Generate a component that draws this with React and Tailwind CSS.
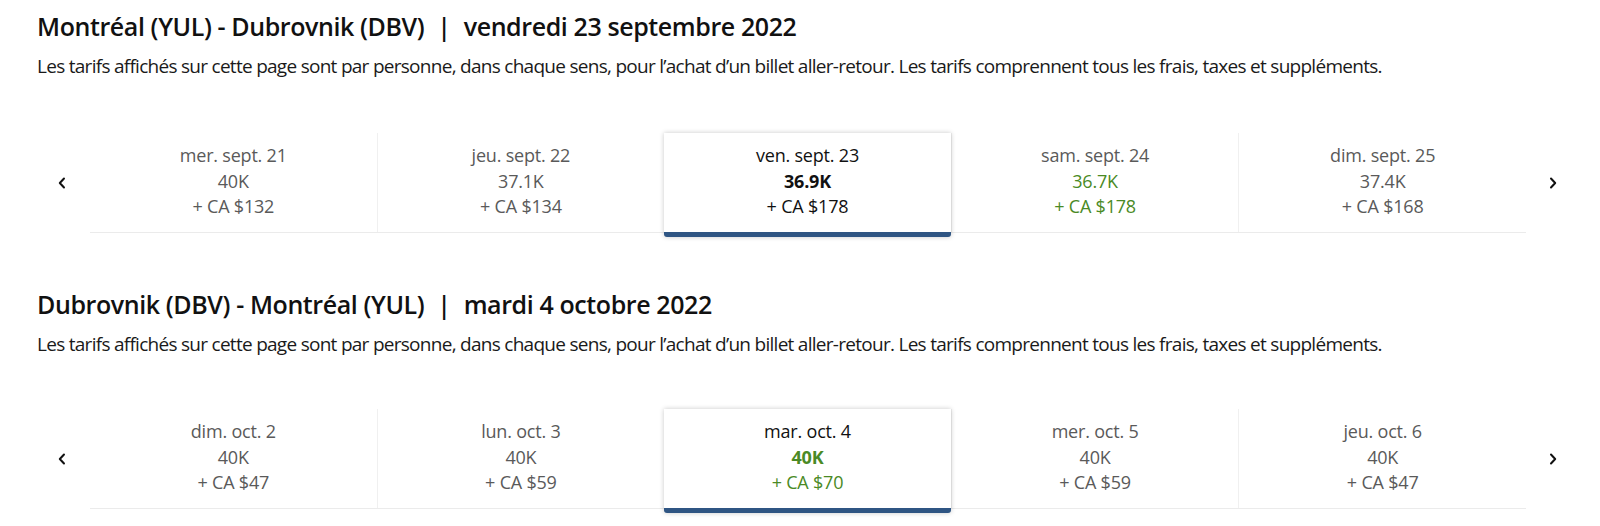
const sections = [
  {
    title: "Montréal (YUL) - Dubrovnik (DBV)",
    date: "vendredi 23 septembre 2022",
    days: [
      { label: "mer. sept. 21", pts: "40K", cash: "+ CA $132" },
      { label: "jeu. sept. 22", pts: "37.1K", cash: "+ CA $134" },
      { label: "ven. sept. 23", pts: "36.9K", cash: "+ CA $178", selected: true },
      { label: "sam. sept. 24", pts: "36.7K", cash: "+ CA $178", cheap: true },
      { label: "dim. sept. 25", pts: "37.4K", cash: "+ CA $168" },
    ],
  },
  {
    title: "Dubrovnik (DBV) - Montréal (YUL)",
    date: "mardi 4 octobre 2022",
    days: [
      { label: "dim. oct. 2", pts: "40K", cash: "+ CA $47" },
      { label: "lun. oct. 3", pts: "40K", cash: "+ CA $59" },
      { label: "mar. oct. 4", pts: "40K", cash: "+ CA $70", selected: true, cheap: true },
      { label: "mer. oct. 5", pts: "40K", cash: "+ CA $59" },
      { label: "jeu. oct. 6", pts: "40K", cash: "+ CA $47" },
    ],
  },
];

function Chevron({ dir }) {
  return (
    <svg width="8" height="12" viewBox="0 0 8 12" fill="none">
      <path
        d={dir === "left" ? "M6 1.5 L1.8 6 L6 10.5" : "M2 1.5 L6.2 6 L2 10.5"}
        stroke="#111"
        strokeWidth="2"
        strokeLinecap="round"
        strokeLinejoin="round"
      />
    </svg>
  );
}

function DayCard({ day, first }) {
  if (day.selected) {
    return (
      <div className="relative z-10 flex-1 h-[104px] -mb-[5px] bg-white rounded-b-[3px] border-b-[5px] border-[#2f5583] shadow-[0_0_5px_rgba(0,0,0,0.22)] pt-[10px] text-center text-[18px] leading-[25.5px] tracking-[-0.2px]">
        <div className="text-[#111]">{day.label}</div>
        <div className={`font-bold ${day.cheap ? "text-[#4a8a25]" : "text-[#111]"}`}>{day.pts}</div>
        <div className={day.cheap ? "text-[#4a8a25]" : "text-[#111]"}>{day.cash}</div>
      </div>
    );
  }
  return (
    <div
      className={`flex-1 h-[99px] pt-[10px] text-center text-[18px] leading-[25.5px] tracking-[-0.2px] text-[#5a5a5a] ${first ? "" : "border-l border-[#f0f0f0]"}`}
    >
      <div>{day.label}</div>
      <div className={day.cheap ? "text-[#4a8a25]" : ""}>{day.pts}</div>
      <div className={day.cheap ? "text-[#4a8a25]" : ""}>{day.cash}</div>
    </div>
  );
}

function FareSection({ section, className, rowGap }) {
  return (
    <section className={className}>
      <h2 className="pl-[37px] text-[25px] leading-[32px] font-semibold text-[#111] tracking-[-0.4px]">
        {section.title}
        <span className="mx-[13px]">|</span>
        {section.date}
      </h2>
      <p className="pl-[37px] mt-[12px] text-[19px] leading-[24px] text-[#1a1a1a] tracking-[-0.72px]">
        Les tarifs affichés sur cette page sont par personne, dans chaque sens, pour l’achat d’un billet aller-retour. Les tarifs comprennent tous les frais, taxes et suppléments.
      </p>
      <div className={`${rowGap} flex items-center pl-[37px]`}>
        <button className="w-[53px] flex justify-center pr-[3px]">
          <Chevron dir="left" />
        </button>
        <div className="w-[1436px] flex border-b border-[#ebebeb]">
          {section.days.map((d, i) => (
            <DayCard key={d.label} day={d} first={i === 0} />
          ))}
        </div>
        <button className="w-[54px] flex justify-center">
          <Chevron dir="right" />
        </button>
      </div>
    </section>
  );
}

export default function App() {
  return (
    <div className="w-[1600px] h-[526px] bg-white overflow-hidden font-['Open_Sans',sans-serif] pt-[10px]">
      <FareSection section={sections[0]} rowGap="mt-[55px]" />
      <FareSection section={sections[1]} className="mt-[55px]" rowGap="mt-[53px]" />
    </div>
  );
}
